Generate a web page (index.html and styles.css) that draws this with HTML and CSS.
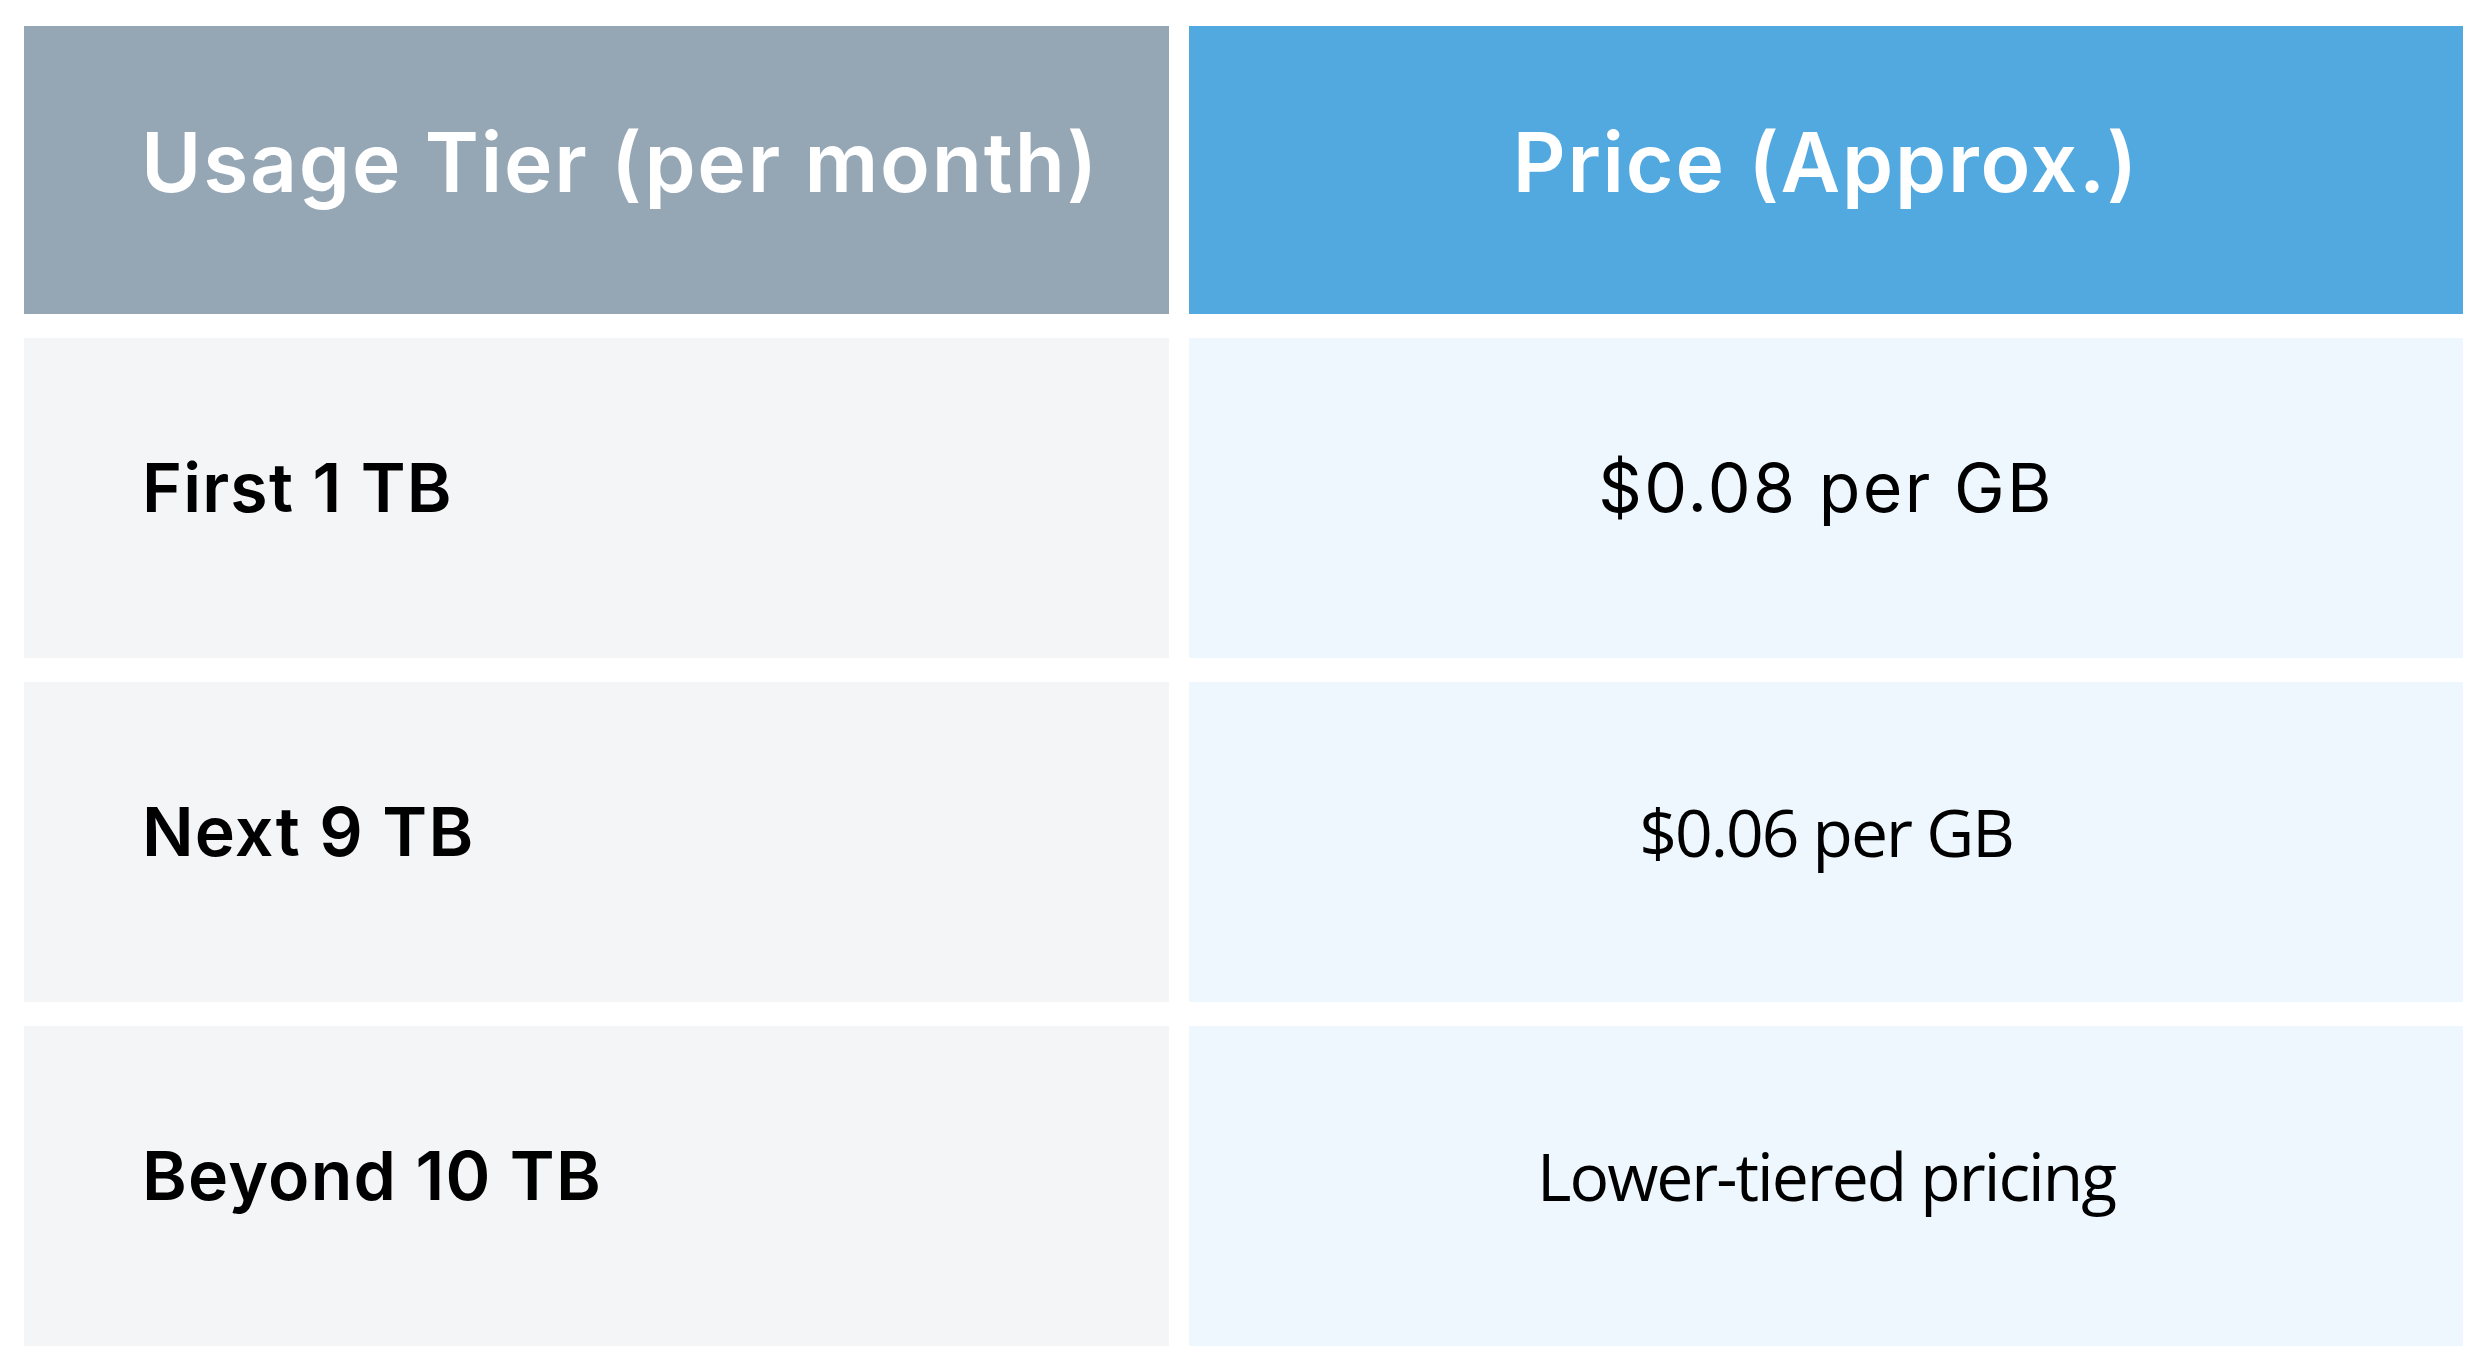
FILE: index.html
```html
<!DOCTYPE html>
<html lang="en">
<head>
<meta charset="utf-8">
<title>Usage Tier Pricing</title>
<link rel="stylesheet" href="styles.css">
</head>
<body>
<div class="table">
  <div class="cell head head-tier">Usage Tier (per month)</div>
  <div class="cell head head-price">Price (Approx.)</div>

  <div class="cell tier">First 1 TB</div>
  <div class="cell price price-geo">$0.08 per GB</div>

  <div class="cell tier">Next 9 TB</div>
  <div class="cell price price-hum">$0.06 per GB</div>

  <div class="cell tier">Beyond 10 TB</div>
  <div class="cell price price-hum">Lower-tiered pricing</div>
</div>
</body>
</html>
```

FILE: styles.css
```css
html, body {
  margin: 0;
  padding: 0;
  background: #ffffff;
}

.table {
  display: grid;
  grid-template-columns: 1145px 1274px;
  grid-template-rows: 288px 320px 320px 320px;
  column-gap: 20px;
  row-gap: 24px;
  padding: 26px 24px;
}

.cell {
  display: flex;
  align-items: center;
  color: #000000;
  line-height: 1.2;
}

.head {
  color: #ffffff;
  font-family: Inter, "Liberation Sans", sans-serif;
  font-weight: 600;
  font-size: 82px;
  letter-spacing: 1.8px;
  padding-bottom: 14px;
}

.head-tier {
  background: #95a6b5;
  padding-left: 117px;
}

.head-price {
  background: #52a9e0;
  justify-content: center;
}

.tier {
  background: #f4f5f7;
  padding-left: 118px;
  padding-bottom: 20px;
  font-family: Inter, "Liberation Sans", sans-serif;
  font-weight: 600;
  font-size: 68px;
  letter-spacing: 1.2px;
}

.price {
  background: #eff7fe;
  justify-content: center;
  padding-bottom: 20px;
}

.price-geo {
  font-family: Inter, "Liberation Sans", sans-serif;
  font-weight: 400;
  font-size: 68px;
  letter-spacing: 2.3px;
}

.price-hum {
  font-family: "Open Sans", "Noto Sans", sans-serif;
  font-weight: 400;
  font-size: 66px;
  letter-spacing: -2px;
}
```
